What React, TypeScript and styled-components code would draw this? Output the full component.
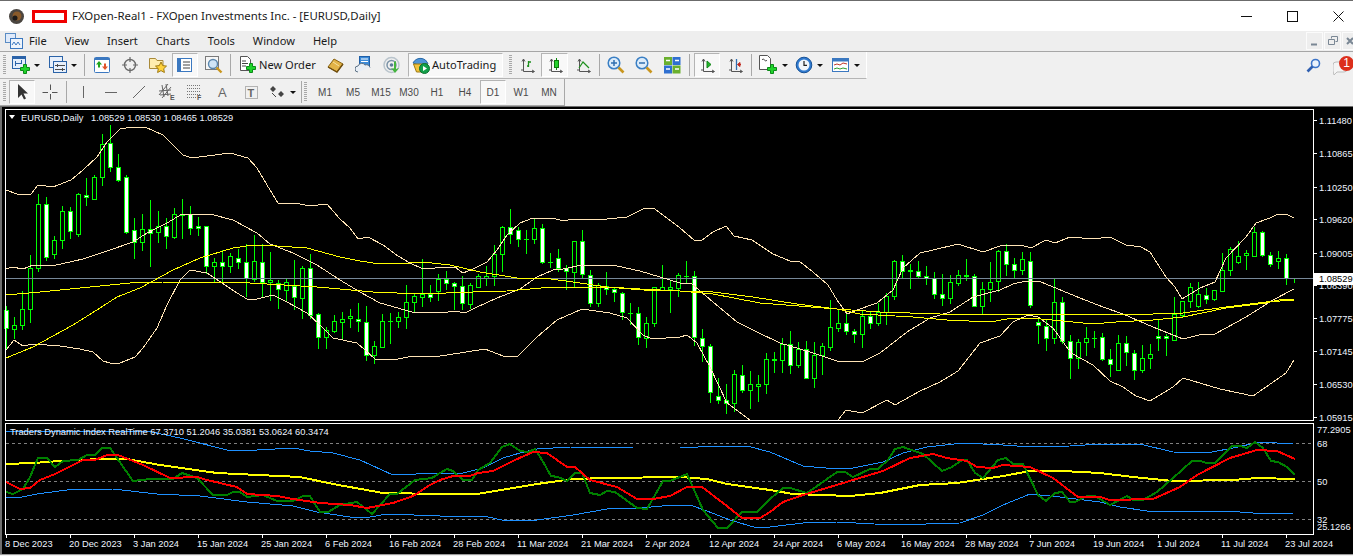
import React from 'react';
import styled, { createGlobalStyle } from 'styled-components';

const GlobalStyle = createGlobalStyle`
  html, body { margin: 0; padding: 0; background: #f0f0f0; overflow: hidden; }
  #root { width: 1353px; height: 556px; }
`;

/* [high, bodyTop, bodyBottom, low, filled] one row per bar, x = 6 + 8 * index */
const bars: number[][] = [
  [306,310,328,348,1],[317,325,329,338,0],[291,309,325,329,0],[255,268,309,322,0],[194,204,268,271,0],[197,204,257,260,1],
  [236,240,254,258,0],[206,211,240,248,0],[207,211,231,238,1],[193,194,234,236,0],[178,195,197,205,1],[175,177,199,199,0],
  [134,144,177,185,0],[125,143,167,171,1],[154,167,180,181,1],[175,177,232,233,1],[218,230,242,258,1],[214,229,242,250,0],
  [200,229,233,266,1],[211,226,232,242,0],[218,226,236,248,1],[208,214,237,238,0],[199,214,215,238,1],[206,214,228,234,1],
  [217,226,228,235,1],[226,226,266,273,1],[258,262,266,282,0],[250,262,266,282,1],[253,256,266,272,0],[249,258,262,268,1],
  [244,262,278,296,1],[235,261,279,281,0],[244,262,282,296,1],[252,280,282,300,0],[280,283,289,308,1],[278,282,290,300,0],
  [260,286,297,309,1],[266,268,298,318,0],[254,268,315,318,1],[313,314,337,348,1],[327,330,337,348,0],[315,321,331,332,0],
  [312,319,322,338,0],[309,316,318,327,0],[303,319,321,331,1],[306,322,355,360,1],[341,346,355,363,0],[314,321,347,347,0],
  [313,321,321,343,0],[312,317,321,327,0],[285,302,317,328,0],[293,296,302,311,0],[259,294,297,306,0],[285,294,297,301,1],
  [274,279,291,300,0],[271,279,283,289,1],[282,283,286,309,1],[276,286,303,309,1],[283,285,304,308,0],[274,276,287,287,0],
  [266,276,278,285,0],[245,254,276,285,0],[226,227,254,271,0],[209,227,234,243,1],[227,230,239,246,1],[230,239,239,253,0],
  [219,228,239,243,0],[224,228,262,263,1],[253,262,262,267,0],[249,258,268,271,1],[265,268,271,289,1],[241,241,272,287,0],
  [230,241,274,277,1],[270,275,303,306,1],[283,285,303,306,0],[272,286,289,294,1],[287,289,292,301,1],[292,293,312,319,1],
  [303,313,313,324,0],[307,313,337,344,1],[317,323,338,347,0],[287,287,323,326,0],[265,287,290,290,0],[281,287,289,312,0],
  [273,275,288,296,0],[261,276,276,282,0],[271,276,337,345,1],[329,338,346,361,1],[344,346,392,402,1],[378,396,400,403,1],
  [384,400,403,413,1],[370,374,403,411,0],[365,375,390,392,1],[371,384,390,408,0],[375,384,386,401,0],[353,359,384,393,0],
  [352,359,360,372,0],[338,344,360,372,0],[331,344,365,373,1],[342,349,365,367,0],[341,349,378,378,1],[342,355,378,387,0],
  [343,346,355,374,0],[300,327,347,350,0],[310,323,328,331,0],[314,323,331,334,1],[329,331,334,342,1],[310,316,334,347,0],
  [311,316,323,328,1],[303,312,323,325,0],[293,296,312,324,0],[260,261,296,299,0],[255,261,271,278,1],[264,270,271,288,0],
  [261,271,276,277,1],[266,276,278,284,1],[272,278,294,298,1],[274,294,298,305,1],[275,282,298,303,0],[270,275,283,285,0],
  [259,275,276,280,1],[274,276,306,306,1],[282,289,306,313,0],[262,282,289,301,0],[250,251,281,291,0],[244,251,264,275,1],
  [258,264,270,278,1],[252,259,270,274,0],[252,261,305,307,1],[318,322,325,343,1],[320,326,338,350,1],[278,302,338,343,0],
  [297,302,341,343,1],[335,341,358,378,1],[339,342,358,368,0],[327,338,342,355,0],[331,338,338,347,0],[333,337,359,360,1],
  [349,359,364,376,1],[335,343,370,370,0],[336,343,352,365,1],[350,353,370,379,1],[345,358,370,372,0],[344,354,358,368,0],
  [320,336,338,350,1],[334,336,338,355,1],[297,314,340,340,0],[301,301,315,317,0],[283,287,301,307,0],[282,294,306,307,0],
  [288,295,299,303,1],[290,290,299,300,0],[253,270,291,291,0],[247,249,270,275,0],[241,256,262,263,0],[250,253,255,269,0],
  [227,232,256,256,0],[231,232,255,256,1],[252,255,264,266,1],[251,258,261,268,0],[254,258,278,284,1],[278,278,278,282,0],
];

const upperBand = '6,190 17,194 31,194 38,185 53,187 71,180 83,170 97,157 107,142 120,129 133,127 145,127 163,135 183,155 192,158 207,156 230,153 248,158 257,168 267,185 278,203 300,204 310,206 327,204 340,219 350,228 358,239 368,237 383,245 398,256 410,263 423,269 447,267 455,267 463,273 473,269 487,262 497,250 507,235 520,223 533,218 553,218 563,221 573,219 607,219 627,217 645,208 655,209 680,228 694,240 702,240 713,232 726,226 734,236 752,240 773,254 790,261 799,261 813,272 828,285 837,300 847,314 857,310 877,303 893,290 903,268 920,253 933,250 958,244 983,252 1003,245 1021,245 1031,248 1046,240 1055,243 1070,237 1093,239 1110,237 1126,245 1141,247 1150,252 1166,277 1175,287 1182,299 1200,288 1215,282 1226,258 1246,237 1256,223 1270,218 1278,214 1286,214 1294,218';
const middleBand = '6,269 12,267 23,269 33,265 52,266 83,259 110,250 133,242 147,233 167,223 182,214 210,214 233,220 257,233 270,244 293,253 317,265 340,280 360,292 380,303 412,312 448,312 455,311 465,313 477,307 497,298 520,289 537,277 553,270 563,269 582,265 617,266 640,271 680,283 692,284 713,302 737,322 757,332 780,343 810,352 837,361 862,362 880,353 907,332 930,318 950,312 973,297 1000,290 1013,284 1026,281 1041,282 1080,298 1103,307 1123,314 1153,327 1183,339 1203,334 1215,334 1246,317 1273,300 1294,289';
const lowerBand = '6,350 14,340 23,346 33,344 60,346 80,349 93,352 103,361 110,363 120,363 135,357 143,348 157,328 167,305 180,280 190,270 207,273 222,283 237,293 247,299 257,299 273,295 287,302 307,313 320,325 333,338 357,343 365,350 375,359 393,360 413,356 440,356 460,353 485,349 503,356 518,356 537,337 557,320 582,309 610,313 627,318 643,335 652,339 680,337 687,335 697,343 710,367 727,403 750,420';
const lowerBandTail = '838,420 846,410 862,413 887,400 895,405 920,391 940,382 958,371 980,343 1000,336 1013,322 1028,315 1038,317 1053,328 1071,353 1093,365 1110,381 1123,387 1136,396 1150,401 1173,387 1183,378 1220,389 1253,396 1276,380 1286,373 1294,360';
const fastAverage = '6,358 33,347 73,325 100,308 117,297 140,288 173,270 200,258 233,248 253,245 277,246 307,248 340,257 360,261 373,263 397,264 423,262 450,265 480,272 517,278 543,278 573,282 607,287 640,289 680,291 713,292 753,297 797,304 837,309 880,312 940,314 1153,314 1183,313 1226,307 1266,302 1294,300';
const slowAverage = '6,295 40,292 80,288 130,283 163,282 233,282 267,284 317,287 340,289 373,292 420,294 473,292 507,291 553,287 607,287 643,290 680,291 713,294 760,303 837,309 860,314 913,317 947,320 990,322 1013,318 1030,318 1063,321 1093,324 1116,322 1153,320 1183,317 1226,308 1266,303 1283,299 1294,300';

const tdiUpper = '6,431 147,431 180,438 227,450 257,450 293,448 310,451 333,453 360,460 393,475 440,473 463,473 483,468 503,458 520,453 537,449 570,447 633,448 680,448 717,446 747,446 770,452 803,466 837,469 853,468 883,462 903,453 927,447 963,443 1003,445 1030,447 1070,446 1100,444 1140,444 1173,452 1207,453 1233,448 1260,442 1293,444';
const tdiLower = '6,497 17,498 37,494 67,490 113,489 157,494 200,496 247,502 293,506 317,512 350,517 370,517 387,514 440,516 483,516 507,521 537,520 573,515 607,509 640,508 673,505 690,505 707,511 730,520 757,528 770,527 803,523 837,522 893,525 960,523 983,515 1003,505 1030,494 1060,497 1100,502 1120,507 1147,511 1227,511 1253,513 1293,513';
const tdiYellow = '6,464 33,463 60,461 100,459 127,459 160,465 217,473 300,477 333,484 383,493 440,494 477,494 507,489 537,484 573,479 607,478 680,477 707,479 727,484 770,490 793,494 850,496 880,493 920,485 957,483 1003,476 1030,471 1063,471 1100,473 1133,477 1173,481 1233,480 1257,478 1295,479';
const tdiRed = '6,482 20,489 30,488 40,480 55,474 83,460 95,460 107,455 118,455 143,465 170,478 197,477 207,480 237,487 247,494 277,496 293,499 320,503 350,505 367,508 393,503 413,496 430,485 440,480 453,476 470,476 478,473 493,471 515,460 533,452 547,453 567,467 575,467 590,480 617,487 637,499 653,499 670,496 687,487 702,487 723,503 742,518 760,518 770,512 783,502 800,496 820,490 853,480 883,471 910,458 933,454 947,458 967,461 977,467 993,468 1003,465 1030,467 1053,478 1078,497 1100,497 1110,500 1153,499 1180,487 1197,475 1230,458 1257,450 1277,451 1295,459';
const tdiGreen = '6,492 13,494 23,489 30,477 38,458 47,458 55,467 63,461 78,460 87,455 95,455 102,448 110,448 133,481 150,479 173,479 182,473 197,478 213,495 227,495 233,492 240,492 247,497 263,495 277,501 293,501 303,496 310,496 320,512 328,512 340,505 357,502 372,514 390,494 397,494 415,480 432,478 440,473 447,469 453,471 463,480 472,480 478,470 490,463 502,447 510,444 520,451 528,452 535,449 542,460 551,476 558,477 567,481 575,473 582,473 590,493 600,495 607,491 615,492 637,508 647,509 663,481 670,481 687,474 703,510 718,528 727,528 742,512 757,512 770,499 783,488 790,488 807,493 820,484 837,472 845,472 853,477 870,469 878,469 888,460 895,449 903,447 923,454 942,471 952,467 962,460 967,460 975,473 983,478 998,460 1006,458 1013,464 1023,464 1038,495 1046,501 1055,493 1062,492 1070,502 1075,502 1087,496 1095,496 1110,505 1127,496 1133,500 1143,500 1157,492 1173,478 1192,461 1200,461 1207,463 1215,463 1232,446 1240,446 1247,448 1255,442 1263,448 1271,461 1278,462 1287,467 1295,475';

const priceLabels: [string, number][] = [
  ['1.11480', 120], ['1.10865', 153], ['1.10250', 187], ['1.09620', 219], ['1.09005', 253],
  ['1.08390', 285], ['1.07775', 318], ['1.07145', 351], ['1.06530', 384], ['1.05915', 417],
];
const tdiLabels: [string, number][] = [['77.2905', 429], ['68', 443], ['50', 481], ['32', 519], ['25.1266', 526]];
const dates = ['8 Dec 2023','20 Dec 2023','3 Jan 2024','15 Jan 2024','25 Jan 2024','6 Feb 2024','16 Feb 2024','28 Feb 2024','11 Mar 2024','21 Mar 2024','2 Apr 2024','12 Apr 2024','24 Apr 2024','6 May 2024','16 May 2024','28 May 2024','7 Jun 2024','19 Jun 2024','1 Jul 2024','11 Jul 2024','23 Jul 2024'];
const menus = ['File', 'View', 'Insert', 'Charts', 'Tools', 'Window', 'Help'];
const periods = ['M1', 'M5', 'M15', 'M30', 'H1', 'H4', 'D1', 'W1', 'MN'];

const Page = styled.div`
  width: 1353px;
  height: 556px;
  display: flex;
  flex-direction: column;
  background: #f0f0f0;
  overflow: hidden;
  font-family: "Noto Sans", "Open Sans", sans-serif;
`;

const TitleBar = styled.div`
  height: 30px;
  flex: none;
  display: flex;
  align-items: center;
  background: #fff;
  border-top: 1px solid #6b6b6b;
  padding-left: 9px;
  color: #1a1a1a;
  font-size: 11.4px;
`;

const RedactBox = styled.div`
  width: 29px;
  height: 7px;
  margin: 0 5px 0 8px;
  background: #fff;
  border: 3px solid #f00000;
`;

const TitleText = styled.span`
  flex: 1;
  white-space: nowrap;
  margin-top: -2px;
`;

const WindowControls = styled.div`
  display: flex;
  height: 100%;
  align-items: center;
  margin-right: -8px;
`;

const WindowButton = styled.div`
  width: 46px;
  display: flex;
  justify-content: center;
`;

const MenuBar = styled.div`
  height: 20px;
  flex: none;
  display: flex;
  align-items: center;
  background: #eeeeee;
  border-bottom: 1px solid #a6a6a6;
  padding-left: 5px;
  font-size: 11.1px;
  color: #1a1a1a;
`;

const MenuItem = styled.span`
  margin: -2px 0 0 ${(p: { $first?: boolean }) => (p.$first ? '-3px' : '0')};
  padding: 0 9px;
`;

const MdiButtons = styled.div`
  margin-left: auto;
  display: flex;
  gap: 1px;
  height: 18px;
  margin-right: -6px;
`;

const MdiButton = styled.div`
  width: 17px;
  border: 1px solid #fbfbfb;
  box-sizing: border-box;
  display: flex;
  align-items: center;
  justify-content: center;
`;

const ToolRow = styled.div`
  height: 27px;
  flex: none;
  display: flex;
  background: #f0f0f0;
`;

const Toolbar = styled.div`
  display: flex;
  align-items: center;
  gap: 2px;
  padding-left: 3px;
  box-sizing: border-box;
  width: ${(p: { $w: number }) => p.$w}px;
  border-right: 1px solid ${(p: { $w: number; $line?: string }) => p.$line || '#fff'};
  border-bottom: 1px solid ${(p: { $w: number; $line?: string }) => p.$line || '#b5b5b5'};
  height: 100%;
`;

const Grip = styled.div`
  width: 3px;
  height: 20px;
  margin-left: ${(p: { $ml?: number }) => p.$ml || 0}px;
  background: repeating-linear-gradient(to bottom, #a8a8a8 0 1px, #f0f0f0 1px 2px);
`;

const Divider = styled.div`
  width: 1px;
  height: 22px;
  background: #a8a8a8;
  margin: 0 ${(p: { $ml: number; $mr: number }) => p.$mr}px 0 ${(p: { $ml: number; $mr: number }) => p.$ml}px;
`;

const ToolButton = styled.div`
  width: ${(p: { $w: number; $on?: boolean }) => p.$w}px;
  height: 24px;
  box-sizing: border-box;
  flex: none;
  display: flex;
  align-items: center;
  justify-content: center;
  gap: 3px;
  border: 1px solid transparent;
  border-color: ${(p) => (p.$on ? '#b4b4b4 #fff #fff #b4b4b4' : 'transparent')};
  background: ${(p) => (p.$on ? '#f8f8f8' : 'transparent')};
`;

const LabelButton = styled(ToolButton)`
  justify-content: flex-start;
  padding-left: 3px;
  gap: 2px;
  font-size: 11.1px;
  color: #1a1a1a;
  white-space: nowrap;
`;

const ButtonLabel = styled.span`
  margin-top: -2px;
`;

const Caret = styled.span`
  width: 0;
  height: 0;
  border-left: 3px solid transparent;
  border-right: 3px solid transparent;
  border-top: 3px solid #111;
  margin-left: 1px;
`;

const PeriodButton = styled.div`
  width: ${(p: { $on?: boolean }) => (p.$on ? 26 : 28)}px;
  height: 24px;
  box-sizing: border-box;
  margin: 0 ${(p: { $on?: boolean }) => (p.$on ? 1 : 0)}px;
  display: flex;
  align-items: center;
  justify-content: center;
  font: 10px "Liberation Sans", sans-serif;
  color: #4a4a4a;
  border: 1px solid transparent;
  border-color: ${(p) => (p.$on ? '#b4b4b4 #fff #fff #b4b4b4' : 'transparent')};
  background: ${(p) => (p.$on ? '#f8f8f8' : 'transparent')};
`;

const PeriodGroup = styled.div`
  display: flex;
  margin-left: 2px;
`;

const RightTools = styled.div`
  margin-left: auto;
  display: flex;
  align-items: flex-start;
  gap: 10px;
  padding: 6px 0 0 0;
  position: relative;
`;

const Badge = styled.span`
  position: absolute;
  right: -1px;
  top: 4px;
  width: 15px;
  height: 15px;
  border-radius: 50%;
  background: #dc2f1c;
  color: #fff;
  font: 12px/15px "Liberation Sans", sans-serif;
  text-align: center;
`;

const Workspace = styled.div`
  flex: none;
  height: 447px;
  background: #000;
  border-top: 1px solid #6f6f6f;
  border-left: 2px solid #6f6f6f;
  display: flex;
  flex-direction: column;
`;

const ChartSvg = styled.svg`
  display: block;
  flex: none;
  font-family: "Liberation Sans", sans-serif;
  font-size: 9.3px;
  fill: #eef4ff;
`;

const BottomStrip = styled.div`
  flex: 1;
  background: #f0f0f0;
  border-top: 1px solid #9a9a9a;
`;

const Line = ({ points, color, width = 1 }: { points: string; color: string; width?: number }) => (
  <polyline points={points} fill="none" stroke={color} strokeWidth={width} strokeLinejoin="round" shapeRendering="crispEdges" />
);

const Candles = () => (
  <g shapeRendering="crispEdges">
    {bars.map(([high, top, bottom, low, filled], i) => {
      const x = 6 + 8 * i;
      return (
        <g key={i}>
          <rect x={x} y={high} width={1} height={low - high + 1} fill="#00ff00" />
          {top === bottom ? (
            <rect x={x - 2} y={top} width={5} height={1} fill="#00ff00" />
          ) : (
            <rect x={x - 1.5} y={top + 0.5} width={4} height={bottom - top} fill={filled ? '#fff' : '#000'} stroke="#00ff00" />
          )}
        </g>
      );
    })}
  </g>
);

const PriceChart = () => (
  <ChartSvg width={1351} height={316} viewBox="2 107 1351 316">
    <Candles />
    <rect x={6} y={278} width={1307} height={1} fill="#778899" />
    <Line points={upperBand} color="#ffe4b5" />
    <Line points={middleBand} color="#ffe4b5" />
    <Line points={lowerBand} color="#ffe4b5" />
    <Line points={lowerBandTail} color="#ffe4b5" />
    <Line points={slowAverage} color="#ffff00" />
    <Line points={fastAverage} color="#ffff00" />
    <rect x={5.5} y={109.5} width={1308} height={311} fill="none" stroke="#fff" shapeRendering="crispEdges" />
    <polygon points="9,115 15,115 12,119" fill="#fff" />
    <text x={21} y={120.5}>EURUSD,Daily</text>
    <text x={91} y={120.5}>1.08529 1.08530 1.08465 1.08529</text>
    {priceLabels.map(([label, y]) => (
      <g key={label}>
        <rect x={1314} y={y} width={3} height={1} fill="#fff" />
        <text x={1319} y={y + 3.5}>{label}</text>
      </g>
    ))}
    <rect x={1314} y={273} width={39} height={12} fill="#fff" />
    <text x={1319} y={282} fill="#000">1.08529</text>
  </ChartSvg>
);

const IndicatorChart = () => (
  <ChartSvg width={1351} height={130} viewBox="2 423 1351 130">
    {[443, 481, 519].map((y) => (
      <line key={y} x1={6} x2={1313} y1={y + 0.5} y2={y + 0.5} stroke="#808080" strokeDasharray="3 3" shapeRendering="crispEdges" />
    ))}
    <Line points={tdiUpper} color="#1e90ff" />
    <Line points={tdiLower} color="#1e90ff" />
    <Line points={tdiYellow} color="#ffff00" width={2} />
    <Line points={tdiGreen} color="#008000" width={2} />
    <Line points={tdiRed} color="#ff0000" width={2} />
    <rect x={5.5} y={423.5} width={1308} height={111} fill="none" stroke="#fff" shapeRendering="crispEdges" />
    <text x={10} y={435}>Traders Dynamic Index RealTime 67.3710 51.2046 35.0381 53.0624 60.3474</text>
    {tdiLabels.map(([label, y]) => (
      <text key={label} x={1317} y={y + 3.5}>{label}</text>
    ))}
    {dates.map((date, i) => (
      <g key={date}>
        <rect x={6 + 64 * i} y={535} width={1} height={3} fill="#fff" />
        <text x={5 + 64 * i} y={546.5}>{date}</text>
      </g>
    ))}
  </ChartSvg>
);

/* toolbar icons */
const Ico = ({ w = 18, h = 18, children }: { w?: number; h?: number; children: React.ReactNode }) => (
  <svg width={w} height={h} viewBox={`0 0 ${w} ${h}`} style={{ flex: 'none' }}>{children}</svg>
);

const Plus = ({ x, y }: { x: number; y: number }) => (
  <path transform={`translate(${x} ${y})`} d="M3.5.5h3v3h3v3h-3v3h-3v-3h-3v-3h3z" fill="#1fd42a" stroke="#0b8a18" />
);

const Axes = ({ c = '#555' }: { c?: string }) => <path d="M4.5 2v12.5H15M3 4.5l1.5-2.5L6 4.5M13 13l2.5 1.5L13 16M2 13h2.5" fill="none" stroke={c} />;

const NewChartIcon = () => (
  <Ico>
    <rect x=".5" y=".5" width="13" height="12" fill="#e4eefb" stroke="#2b63a8" />
    <path d="M1 2h12" stroke="#2b63a8" strokeWidth="2" />
    <path d="M3.500 5v5M9.500 4v4M3.500 7.500h6" stroke="#2b63a8" />
    <Plus x={8} y={8} />
  </Ico>
);
const ProfilesIcon = () => (
  <Ico>
    <rect x=".5" y=".5" width="13" height="11" fill="#e8f0fb" stroke="#2b63a8" />
    <rect x="4.500" y="5.500" width="13" height="11" fill="#e8f0fb" stroke="#2b63a8" />
    <path d="M6 9.500h10M6 13.500h10M8.500 8v3M13.500 12v3" stroke="#4a4a4a" />
  </Ico>
);
const WatchIcon = () => (
  <Ico>
    <rect x="1.500" y="1.500" width="15" height="15" rx="1" fill="#fff" stroke="#3b78c0" />
    <path d="M1.500 3h15" stroke="#3b78c0" strokeWidth="2" />
    <path d="M6 5l3 3.500H7v3H5v-3H3z" fill="#1ea51e" />
    <path d="M12 14l-3-3.500h2v-3h2v3h2z" fill="#e0542a" />
  </Ico>
);
const NavigatorIcon = () => (
  <Ico>
    <circle cx="9" cy="9" r="5.500" fill="none" stroke="#6a6a6a" strokeWidth="1.400" />
    <path d="M9 1v5M9 12v5M1 9h5M12 9h5" stroke="#6a6a6a" strokeWidth="1.200" />
  </Ico>
);
const FavoritesIcon = () => (
  <Ico>
    <path d="M.5 2.500h6l1.500 2h6v8H.5z" fill="#ffedb0" stroke="#a98a3a" />
    <path d="M12 6l1.700 3.600 3.800.5-2.800 2.600.7 3.800-3.400-1.900-3.400 1.900.7-3.800-2.800-2.600 3.800-.5z" fill="#ffd23c" stroke="#a07a10" />
  </Ico>
);
const TerminalIcon = () => (
  <Ico w={16} h={16}>
    <rect x=".5" y="1.500" width="14" height="13" fill="#fff" stroke="#3b78c0" />
    <rect x="1" y="2" width="3" height="12" fill="#3b78c0" />
    <path d="M6 5h7M6 8h7M6 11h7" stroke="#444" />
  </Ico>
);
const TesterIcon = () => (
  <Ico>
    <rect x=".5" y=".5" width="13" height="13" fill="#f6f6f6" stroke="#7a7a7a" />
    <circle cx="8" cy="8" r="4.500" fill="#cfe4f6" stroke="#5a86ad" strokeWidth="1.400" />
    <path d="M11.500 11.500l5 5" stroke="#c9961e" strokeWidth="2.400" />
  </Ico>
);
const NewOrderIcon = () => (
  <Ico>
    <path d="M1.500.5h7l3 3v11h-10z" fill="#fff" stroke="#555" />
    <path d="M3 5h4M3 7.500h6M3 10h4" stroke="#444" />
    <Plus x={7} y={7} />
  </Ico>
);
const EditorIcon = () => (
  <Ico>
    <path d="M1 11l6-8 9 5-6 8z" fill="#e2b347" stroke="#8a6414" />
    <path d="M1 11l9 5 6-8" fill="none" stroke="#6f4e10" strokeWidth="1.400" />
    <path d="M6 6l6 4" stroke="#f6e1a0" />
  </Ico>
);
const CloudIcon = () => (
  <Ico>
    <rect x="4.500" y=".5" width="10" height="10" fill="#3b8ad8" stroke="#1f5fa8" />
    <path d="M6 3h7M6 5.500h7" stroke="#fff" />
    <path d="M3 16a3 3 0 0 1 0-6 4 4 0 0 1 7-1 4 4 0 0 1 5 2.500 2.500 0 0 1 0 4.500z" fill="#e8eef5" stroke="#5f7387" />
  </Ico>
);
const SignalIcon = () => (
  <Ico>
    <circle cx="8.500" cy="9" r="7.500" fill="none" stroke="#b9c4cc" strokeWidth="1.500" />
    <circle cx="8.500" cy="9" r="4.500" fill="none" stroke="#7b93a8" strokeWidth="1.500" />
    <circle cx="8.500" cy="9" r="1.800" fill="#5b7b98" />
    <path d="M11 6v7l-3-1 4 5 4-5-3 1V5z" fill="#45b53e" />
  </Ico>
);
const AutoIcon = () => (
  <Ico>
    <path d="M1 7c3-6 11-6 14-1l1 2-7 2z" fill="#4f95d8" stroke="#2a6aa8" />
    <path d="M1.500 8h14l-2 8h-9z" fill="#f3c33c" stroke="#9b7a14" />
    <circle cx="12.500" cy="12.500" r="5" fill="#13a04a" stroke="#0a7030" />
    <path d="M11 10l4 2.500-4 2.500z" fill="#fff" />
  </Ico>
);
const BarTypeIcon = () => (
  <Ico w={16} h={16}>
    <Axes />
    <path d="M9.500 4v6M8 9h1.500M9.500 5H12" stroke="#1c8f1c" strokeWidth="1.300" fill="none" />
  </Ico>
);
const CandleTypeIcon = () => (
  <Ico w={16} h={16}>
    <Axes />
    <path d="M9.500 1v12" stroke="#0c8a0c" />
    <rect x="7.500" y="3.500" width="4" height="7" fill="#25d12c" stroke="#0c7a0c" />
  </Ico>
);
const LineTypeIcon = () => (
  <Ico w={16} h={16}>
    <Axes />
    <path d="M4 11l4-6 3 3 3 3" fill="none" stroke="#1c8f1c" strokeWidth="1.200" />
  </Ico>
);
const ZoomIcon = ({ minus }: { minus?: boolean }) => (
  <Ico>
    <circle cx="7" cy="7" r="5.800" fill="#dcecfa" stroke="#3a7fc4" strokeWidth="1.500" />
    <path d={minus ? 'M4 7h6' : 'M4 7h6M7 4v6'} stroke="#2f6fb0" strokeWidth="1.500" />
    <path d="M11.500 11.500l5 5" stroke="#c9961e" strokeWidth="2.600" />
  </Ico>
);
const TileIcon = () => (
  <Ico>
    <rect x="1" y="1" width="8" height="8" fill="#6ab02e" />
    <rect x="9.500" y="1" width="8" height="8" fill="#2f6fd0" />
    <rect x="1" y="9.500" width="8" height="8" fill="#2f6fd0" />
    <rect x="9.500" y="9.500" width="8" height="8" fill="#6ab02e" />
    <path d="M3 4.500h4M12 4.500h4M3 13h4M12 13h4" stroke="#fff" strokeWidth="1.500" />
  </Ico>
);
const AutoScrollIcon = () => (
  <Ico w={16} h={16}>
    <Axes />
    <path d="M8 4l4 3.500-4 3.500z" fill="#23b52a" stroke="#13851a" />
  </Ico>
);
const ShiftIcon = () => (
  <Ico w={16} h={16}>
    <Axes />
    <path d="M9.500 2v11" stroke="#2e6db0" strokeWidth="1.300" />
    <path d="M14 7.500h-2M10.500 7.500l2.500-2v4z" fill="#c0281e" stroke="#c0281e" />
  </Ico>
);
const IndicatorIcon = () => (
  <Ico w={20} h={20}>
    <path d="M1.500.5h8l3 3v11h-11z" fill="#fff" stroke="#555" />
    <path d="M4 5c2-3 3 3 5 0" fill="none" stroke="#333" />
    <Plus x={9} y={9} />
  </Ico>
);
const ClockIcon = () => (
  <Ico>
    <circle cx="9" cy="9" r="7.800" fill="#2f7ad0" stroke="#175296" />
    <circle cx="9" cy="9" r="5.500" fill="#f2f6fb" />
    <path d="M9 5v4.300h3" fill="none" stroke="#222" strokeWidth="1.200" />
  </Ico>
);
const TemplateIcon = () => (
  <Ico>
    <rect x=".5" y="2.500" width="16" height="13" fill="#fff" stroke="#3b78c0" />
    <path d="M.5 4h16" stroke="#3b78c0" strokeWidth="3" />
    <path d="M2 9l3-1 3 1 3-2 4 1" fill="none" stroke="#c0392b" />
    <path d="M2 13l3-1 3 1 3-1 4 1" fill="none" stroke="#2f9e2f" />
  </Ico>
);
const CursorIcon = () => (
  <Ico w={14} h={18}><path d="M3 1v14l3.500-3.500 2.500 5 2-1-2.500-5H13z" fill="#333" /></Ico>
);
const CrossIcon = () => (
  <Ico w={16} h={16}><path d="M8.500 .5v5.500M8.500 10v5.500M.5 8.500H6M10 8.500h5.500" stroke="#555" /></Ico>
);
const VLineIcon = () => <Ico w={4} h={14}><path d="M2.500 1v12" stroke="#666" /></Ico>;
const HLineIcon = () => <Ico w={14} h={4}><path d="M1 2.500h12" stroke="#666" /></Ico>;
const TrendIcon = () => <Ico w={14} h={14}><path d="M1 13L13 1" stroke="#666" /></Ico>;
const ChannelIcon = () => (
  <Ico>
    <path d="M1 12L10 1M4 15l9-11M1 8l12-1M2 12l11-1M4 2l2 12M8 1l2 12" stroke="#666" fill="none" />
    <text x="12" y="17" fontSize="7" fontWeight="700" fontFamily="Liberation Sans" fill="#555">E</text>
  </Ico>
);
const FiboIcon = () => (
  <Ico>
    <path d="M1 2.500h13M1 5.500h13M1 8.500h13M1 11.500h13" stroke="#777" strokeDasharray="1 1" />
    <path d="M1 14.500h9" stroke="#777" strokeDasharray="1 1" />
    <text x="11" y="17" fontSize="7" fontWeight="700" fontFamily="Liberation Sans" fill="#555">F</text>
  </Ico>
);
const TextIcon = () => (
  <Ico w={12} h={14}><text x="1" y="12" fontSize="13" fontFamily="Liberation Sans" fill="#666">A</text></Ico>
);
const LabelIcon = () => (
  <Ico w={15} h={15}>
    <rect x="1.500" y="1.500" width="12" height="12" fill="none" stroke="#777" strokeDasharray="1 1" />
    <text x="3.500" y="12" fontSize="11" fontWeight="700" fontFamily="Liberation Sans" fill="#666">T</text>
  </Ico>
);
const ArrowsIcon = () => (
  <Ico>
    <path d="M5 3l3 3-3 3-3-3zM13 8l3 3-3 3-3-3z" fill="#444" />
    <path d="M4 10l4 4" stroke="#444" />
  </Ico>
);

const App: React.FC = () => (
  <Page>
    <GlobalStyle />
    <TitleBar>
      <svg width="15" height="15" viewBox="0 0 15 15" style={{ flex: 'none' }}>
        <circle cx="7.500" cy="7.500" r="7.500" fill="#4a4540" />
        <circle cx="8" cy="7" r="4.500" fill="#8a5a2a" />
        <circle cx="6" cy="9" r="2.500" fill="#1d1a18" />
      </svg>
      <RedactBox />
      <TitleText>FXOpen-Real1 - FXOpen Investments Inc. - [EURUSD,Daily]</TitleText>
      <WindowControls>
        <WindowButton><svg width="11" height="11"><path d="M0 5.500h11" stroke="#111" /></svg></WindowButton>
        <WindowButton><svg width="11" height="11"><rect x=".5" y=".5" width="10" height="10" fill="none" stroke="#111" /></svg></WindowButton>
        <WindowButton><svg width="11" height="11"><path d="M.5.500l10 10M10.500.500l-10 10" stroke="#111" /></svg></WindowButton>
      </WindowControls>
    </TitleBar>
    <MenuBar>
      <svg width="18" height="16" viewBox="0 0 18 16" style={{ flex: 'none' }}>
        <rect x=".5" y=".5" width="10" height="9" fill="#dfeafa" stroke="#5a8cc4" />
        <rect x="5.500" y="5.500" width="12" height="10" fill="#eef4fb" stroke="#3b78c0" />
        <path d="M7 12l2-3 2 3 2-3 2 3" fill="none" stroke="#3b78c0" />
      </svg>
      {menus.map((m, i) => (
        <MenuItem key={m} $first={i === 0}>{m}</MenuItem>
      ))}
      <MdiButtons>
        <MdiButton><svg width="9" height="9"><path d="M1 7.500h6" stroke="#7a8794" strokeWidth="2" /></svg></MdiButton>
        <MdiButton><svg width="10" height="10"><path d="M3.500 2.500v-2h6v5h-2M.5 3.500h6v5h-6z" fill="none" stroke="#7a8794" /></svg></MdiButton>
        <MdiButton><svg width="9" height="9"><path d="M1 1l6 6M7 1l-6 6" stroke="#7a8794" strokeWidth="2" /></svg></MdiButton>
      </MdiButtons>
    </MenuBar>
    <ToolRow>
      <Toolbar $w={867}>
        <Grip />
        <ToolButton $w={35}><NewChartIcon /><Caret /></ToolButton>
        <ToolButton $w={35}><ProfilesIcon /><Caret /></ToolButton>
        <Divider $ml={2} $mr={1} />
        <ToolButton $w={27}><WatchIcon /></ToolButton>
        <ToolButton $w={26}><NavigatorIcon /></ToolButton>
        <ToolButton $w={25}><FavoritesIcon /></ToolButton>
        <ToolButton $w={26} $on><TerminalIcon /></ToolButton>
        <ToolButton $w={28}><TesterIcon /></ToolButton>
        <Divider $ml={0} $mr={2} />
        <LabelButton $w={85}><NewOrderIcon /><ButtonLabel>New Order</ButtonLabel></LabelButton>
        <ToolButton $w={28}><EditorIcon /></ToolButton>
        <ToolButton $w={24}><CloudIcon /></ToolButton>
        <ToolButton $w={28}><SignalIcon /></ToolButton>
        <LabelButton $w={95} $on><AutoIcon /><ButtonLabel>AutoTrading</ButtonLabel></LabelButton>
        <Grip $ml={4} />
        <ToolButton $w={25}><BarTypeIcon /></ToolButton>
        <ToolButton $w={27} $on><CandleTypeIcon /></ToolButton>
        <ToolButton $w={26}><LineTypeIcon /></ToolButton>
        <Divider $ml={1} $mr={1} />
        <ToolButton $w={26}><ZoomIcon /></ToolButton>
        <ToolButton $w={26}><ZoomIcon minus /></ToolButton>
        <ToolButton $w={26}><TileIcon /></ToolButton>
        <Divider $ml={2} $mr={2} />
        <ToolButton $w={26} $on><AutoScrollIcon /></ToolButton>
        <ToolButton $w={26}><ShiftIcon /></ToolButton>
        <Divider $ml={1} $mr={2} />
        <ToolButton $w={34}><IndicatorIcon /><Caret /></ToolButton>
        <ToolButton $w={34}><ClockIcon /><Caret /></ToolButton>
        <ToolButton $w={35}><TemplateIcon /><Caret /></ToolButton>
      </Toolbar>
      <RightTools>
        <svg width="15" height="15" viewBox="0 0 15 15" style={{ flex: 'none', marginRight: 2 }}>
          <circle cx="9.500" cy="5.500" r="4" fill="#eaf2fb" stroke="#3c74c8" strokeWidth="1.600" />
          <path d="M6.500 8.500L1.500 13.500" stroke="#2f5fb0" strokeWidth="2.600" />
        </svg>
        <svg width="20" height="18" viewBox="2 0 20 18" style={{ flex: 'none' }}>
          <path d="M2 13V7a3 3 0 0 1 3-3h8a3 3 0 0 1 3 3v4a3 3 0 0 1-3 3H6l-3 3z" fill="#f4f4f4" stroke="#bdbdbd" />
        </svg>
        <Badge>1</Badge>
      </RightTools>
    </ToolRow>
    <ToolRow>
      <Toolbar $w={565} $line="#a8a8a8">
        <Grip />
        <ToolButton $w={26} $on style={{ marginLeft: 1 }}><CursorIcon /></ToolButton>
        <ToolButton $w={26}><CrossIcon /></ToolButton>
        <Divider $ml={1} $mr={1} />
        <ToolButton $w={26}><VLineIcon /></ToolButton>
        <ToolButton $w={26}><HLineIcon /></ToolButton>
        <ToolButton $w={26}><TrendIcon /></ToolButton>
        <ToolButton $w={26}><ChannelIcon /></ToolButton>
        <ToolButton $w={26}><FiboIcon /></ToolButton>
        <ToolButton $w={26}><TextIcon /></ToolButton>
        <ToolButton $w={26}><LabelIcon /></ToolButton>
        <ToolButton $w={32}><ArrowsIcon /><Caret /></ToolButton>
        <Divider $ml={1} $mr={0} />
        <Grip />
        <PeriodGroup>
          {periods.map((p) => (
            <PeriodButton key={p} $on={p === 'D1'}>{p}</PeriodButton>
          ))}
        </PeriodGroup>
      </Toolbar>
    </ToolRow>
    <Workspace>
      <PriceChart />
      <IndicatorChart />
    </Workspace>
    <BottomStrip />
  </Page>
);

export default App;
